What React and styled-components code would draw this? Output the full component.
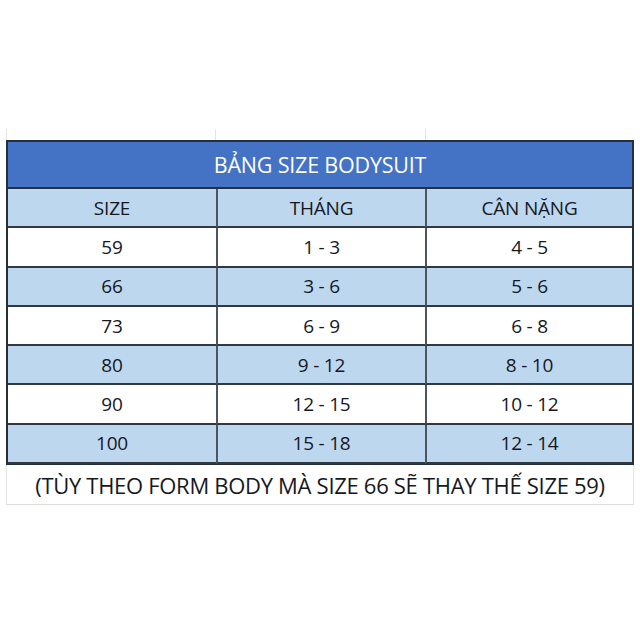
import React from 'react';
import styled, { createGlobalStyle } from 'styled-components';

const GlobalStyle = createGlobalStyle`
  html, body {
    margin: 0;
    padding: 0;
    background: #ffffff;
  }
  body {
    font-family: "Open Sans", "Liberation Sans", sans-serif;
    color: #15181e;
  }
  * {
    box-sizing: border-box;
  }
`;

const rows = [
  ['59', '1 - 3', '4 - 5'],
  ['66', '3 - 6', '5 - 6'],
  ['73', '6 - 9', '6 - 8'],
  ['80', '9 - 12', '8 - 10'],
  ['90', '12 - 15', '10 - 12'],
  ['100', '15 - 18', '12 - 14'],
];

const Page = styled.div`
  width: 640px;
  height: 640px;
  padding-top: 129px;
`;

const Sheet = styled.div`
  margin-left: 6px;
  width: 628px;
  display: grid;
  grid-template-columns: repeat(3, 1fr);
`;

const GridStub = styled.div`
  height: 11px;
  border-left: 1px solid #e4e4e4;
  &:last-of-type {
    border-right: 1px solid #e4e4e4;
  }
`;

const Table = styled.div`
  grid-column: 1 / -1;
  display: grid;
  grid-template-columns: 208px 209px 1fr;
  border: 2px solid #26303c;
  border-bottom-width: 1px;
`;

const Title = styled.div`
  grid-column: 1 / -1;
  height: 47px;
  background: #4472c4;
  color: #ffffff;
  display: flex;
  align-items: center;
  justify-content: center;
  font-size: 21.5px;
  letter-spacing: -0.2px;
  border-bottom: 2px solid #26303c;
`;

const Cell = styled.div`
  height: 39.3px;
  display: flex;
  align-items: center;
  justify-content: center;
  font-size: 19px;
  letter-spacing: -0.2px;
  background: ${p => (p.$blue ? '#bdd7ee' : '#ffffff')};
  border-bottom: 2px solid #2f3843;
  border-left: ${p => (p.$first ? 'none' : '2px solid #4d5560')};
`;

const Note = styled.div`
  grid-column: 1 / -1;
  height: 40px;
  display: flex;
  align-items: center;
  justify-content: center;
  font-size: 22px;
  letter-spacing: -0.3px;
  border-left: 1px solid #e4e4e4;
  border-right: 1px solid #e4e4e4;
  border-bottom: 1px solid #dcdcdc;
`;

export default function App() {
  return (
    <Page>
      <GlobalStyle />
      <Sheet>
        <GridStub />
        <GridStub />
        <GridStub />
        <Table>
          <Title>BẢNG SIZE BODYSUIT</Title>
          <Cell $blue $first>SIZE</Cell>
          <Cell $blue>THÁNG</Cell>
          <Cell $blue>CÂN NẶNG</Cell>
          {rows.map((r, i) =>
            r.map((v, j) => (
              <Cell key={`${i}-${j}`} $blue={i % 2 === 1} $first={j === 0}>
                {v}
              </Cell>
            ))
          )}
        </Table>
        <Note>(TÙY THEO FORM BODY MÀ SIZE 66 SẼ THAY THẾ SIZE 59)</Note>
      </Sheet>
    </Page>
  );
}
